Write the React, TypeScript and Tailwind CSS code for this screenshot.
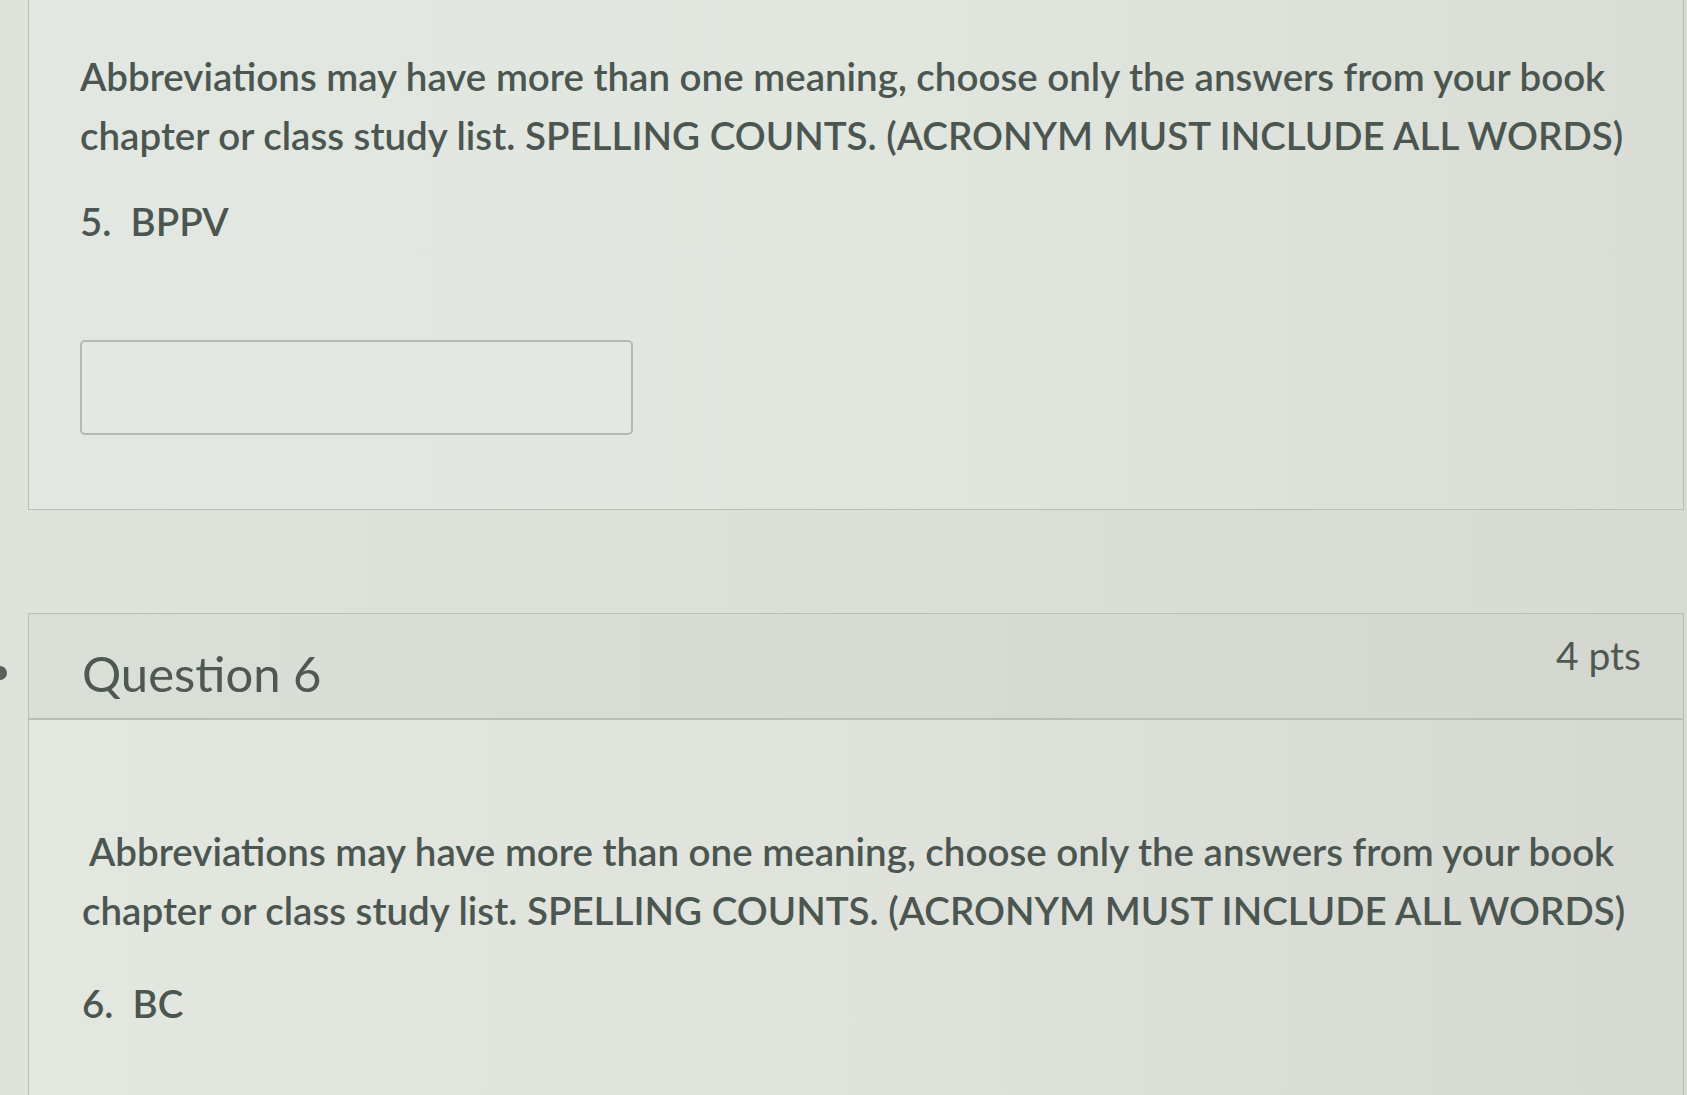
const prompt =
  'Abbreviations may have more than one meaning, choose only the answers from your book chapter or class study list. SPELLING COUNTS. (ACRONYM MUST INCLUDE ALL WORDS)'

function QuestionText({ indent }: { indent?: boolean }) {
  return (
    <p
      className={`w-[1570px] text-[38.5px] font-semibold leading-[59px] text-[#4c5651] ${indent ? 'indent-[7px]' : ''}`}
    >
      {prompt}
    </p>
  )
}

export default function App() {
  return (
    <div className="relative h-[1095px] w-full overflow-hidden bg-linear-to-r from-[#dfe3dc] to-[#d8dbd4] font-[Lato,'Liberation_Sans',sans-serif]">
      {/* question 5, scrolled so only its body shows */}
      <div className="ml-[28px] h-[510px] w-[1656px] border-x border-b border-[#b9beb7] bg-linear-to-r from-[#e2e8e1] via-[#e1e6df] to-[#d9ddd6] pl-[51px] pt-[47px]">
        <QuestionText />
        <p className="mt-[26px] text-[38.5px] font-semibold leading-[60px] text-[#4c5651]">5.&nbsp; BPPV</p>
        <div className="mt-[89px] h-[95px] w-[553px] rounded-[5px] border-2 border-[#b4bab3] bg-[#e3e9e2]" />
      </div>

      {/* question 6 */}
      <div className="ml-[28px] mt-[103px] w-[1656px] border border-[#b9beb7]">
        <div className="flex h-[106px] items-start justify-between border-b-2 border-[#b9beb7] bg-linear-to-r from-[#dadfd8] to-[#d4d7d0] pl-[53px] pr-[42px]">
          <h2 className="mt-[31px] text-[49px] font-normal leading-[56px] text-[#4f5853]">Question 6</h2>
          <span className="mt-[21px] text-[39px] leading-[40px] text-[#4f5853]">4 pts</span>
        </div>
        <div className="h-[400px] bg-linear-to-r from-[#e2e7e0] via-[#e0e3dc] to-[#d6d9d2] pl-[53px] pt-[102px]">
          <QuestionText indent />
          <p className="mt-[33px] text-[38.5px] font-semibold leading-[60px] text-[#4c5651]">6.&nbsp; BC</p>
        </div>
      </div>

      {/* edge of the flag marker beside question 6 */}
      <span className="absolute left-[-7px] top-[666px] h-[14px] w-[14px] rounded-full bg-[#5a605c]" />
    </div>
  )
}
